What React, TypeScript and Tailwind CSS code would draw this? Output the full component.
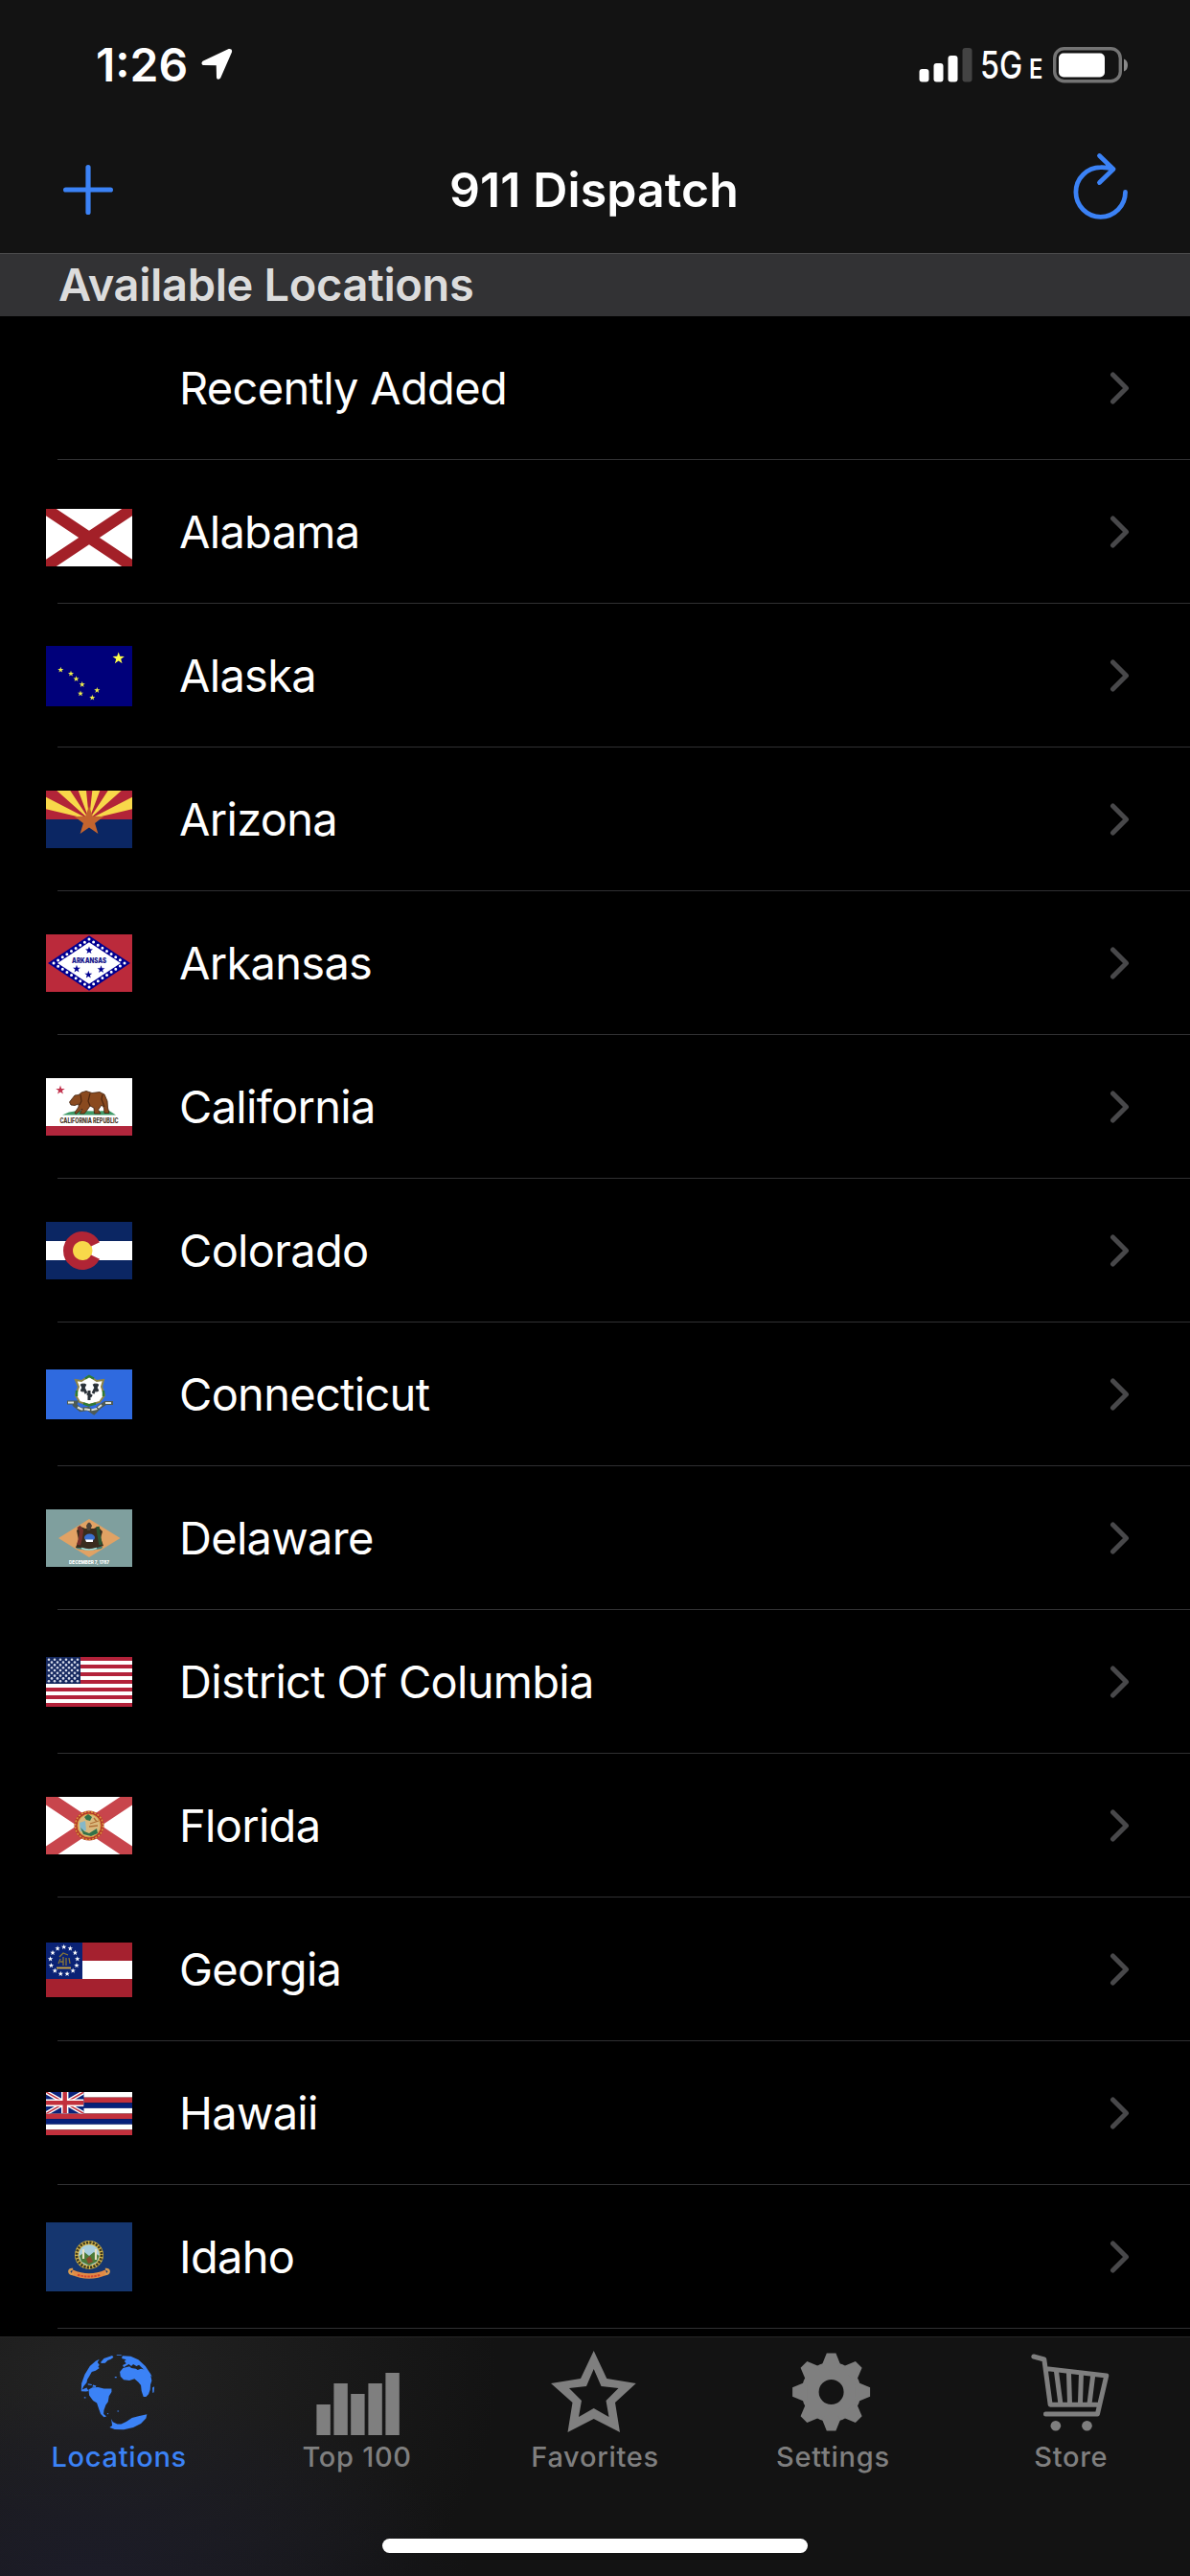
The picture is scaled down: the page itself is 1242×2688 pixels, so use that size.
import type { ReactNode } from "react";

type Location = {
  name: string;
  height?: number;
  shift?: boolean;
  flag?: ReactNode;
};

function starPoints(cx: number, cy: number, r: number) {
  return Array.from({ length: 10 }, (_, i) => {
    const a = (Math.PI / 5) * i - Math.PI / 2;
    const d = i % 2 ? r * 0.4 : r;
    return `${(cx + d * Math.cos(a)).toFixed(2)},${(cy + d * Math.sin(a)).toFixed(2)}`;
  }).join(" ");
}

function Star({ x, y, r, fill }: { x: number; y: number; r: number; fill: string }) {
  return <polygon points={starPoints(x, y, r)} fill={fill} />;
}

const alabama = (
  <>
    <rect width="90" height="60" fill="#fff" />
    <path d="M0 0 90 60M90 0 0 60" stroke="#a32028" strokeWidth="12" />
  </>
);

const alaska = (
  <>
    <rect width="90" height="63" fill="#00007a" />
    <Star x={75.7} y={12.9} r={6.5} fill="#ffff4a" />
    {[
      [15.3, 25],
      [26, 29],
      [31.5, 34.5],
      [37.7, 40.3],
      [36, 49.7],
      [53.3, 46.3],
      [48.3, 54],
    ].map(([x, y]) => (
      <Star key={x} x={x} y={y} r={3.2} fill="#efef4a" />
    ))}
  </>
);

const arizona = (
  <>
    <rect width="90" height="30" fill="#b22438" />
    <rect y="30" width="90" height="30" fill="#0b2663" />
    <path
      d="M45 30 0 19.3V6.7ZM45 30 11.3 0H25.3ZM45 30 33.7 0H42ZM45 30 48.3 0H56.3ZM45 30 64.7 0H78.7ZM45 30 90 6.7V19.3Z"
      fill="#f8d84a"
    />
    <Star x={45} y={32} r={16} fill="#c4642e" />
  </>
);

const arkansas = (
  <>
    <rect width="90" height="60" fill="#bb2a3b" />
    <path d="M2 30 45 1.2 88 30 45 58.8Z" fill="#000091" />
    <path d="M12 30 45 8.3 78 30 45 51.7Z" fill="#fff" />
    <path
      d="M8 30 45 5 82 30 45 55Z"
      fill="none"
      stroke="#fff"
      strokeWidth="3"
      strokeLinecap="round"
      strokeDasharray="0 5.58"
    />
    <Star x={45} y={16.7} r={4.2} fill="#000091" />
    <Star x={32} y={36} r={4.2} fill="#000091" />
    <Star x={57.5} y={36.5} r={4.2} fill="#000091" />
    <Star x={44.3} y={42} r={4.2} fill="#000091" />
    <text
      x="45"
      y="29.6"
      textAnchor="middle"
      textLength="36"
      lengthAdjust="spacingAndGlyphs"
      fontSize="7.4"
      fontWeight="900"
      fill="#1a1a8c"
    >
      ARKANSAS
    </text>
  </>
);

const california = (
  <>
    <rect width="90" height="60" fill="#fff" />
    <rect y="50" width="90" height="10" fill="#b1263c" />
    <Star x={15} y={12.5} r={5} fill="#c2334e" />
    <path d="M17 38.5 24 35.5 33 34 52 34.5 66 34 73 38.5Z" fill="#3f9a68" />
    <path
      d="M24.5 25 28 20.5 30 18 34 17.5 37 15 42 13.5 48 15.5 56 14.5 61 17 64 24 64.5 31 66 36.5 61 36.5 60.5 31 58 28 54.5 33 57 37 50.5 37 50 31 46 29 42.5 34 40 37 35.5 37 38 32 33 36 31 37.5 30 36 34 30 34 27 30 28.5 26 28Z"
      fill="#8a4a1f"
      stroke="#3d1f0c"
      strokeWidth="0.8"
    />
    <path d="M46 16 44 24 46 29M59 17 58 22 61 30M36 17 37 24 35 28" fill="none" stroke="#4e260e" strokeWidth="1.2" />
    <text
      x="45"
      y="46.8"
      textAnchor="middle"
      textLength="61"
      lengthAdjust="spacingAndGlyphs"
      fontSize="7.2"
      fontWeight="800"
      fill="#4a3728"
    >
      CALIFORNIA REPUBLIC
    </text>
  </>
);

const colorado = (
  <>
    <rect width="90" height="60" fill="#0b2663" />
    <rect y="20" width="90" height="20" fill="#fff" />
    <circle cx="38" cy="30" r="10.5" fill="#f8d84a" />
    <path d="M51.5 23.4A15 15 0 1 0 51.5 36.6" fill="none" stroke="#b02535" strokeWidth="10" />
  </>
);

const connecticut = (
  <>
    <rect width="90" height="52" fill="#2f6adf" />
    <path
      d="M31 11 37 12 45 7 53 12 60 11 58 18 61 27 56 34 45 37 35 34 31 27 34 18Z"
      fill="#fff"
      stroke="#8f8444"
      strokeWidth="2"
    />
    <path
      d="M41 9.5 45 7 50 9.5M32 22V28M60 22V28M39 35.5 45 37.500 52 35.5"
      fill="none"
      stroke="#2f7a35"
      strokeWidth="2.5"
    />
    <path
      d="M37 15 42 25M41 15 37 23M54 15 49 25M50 15 54 23M45 22V32M43 25 48 28"
      stroke="#2a3138"
      strokeWidth="3"
    />
    <path
      d="M22 34.5H31L30 37 36 42 44 41 50 45 56 39 62 35H70"
      fill="none"
      stroke="#4d5a55"
      strokeWidth="4.2"
    />
    <path
      d="M23 34.5H29M62 35H68M33 39.5 37 41.5 42 41.5 47 42.5 53 41 58 37"
      fill="none"
      stroke="#dce0d8"
      strokeWidth="2"
      strokeDasharray="6 1.5"
    />
  </>
);

const delaware = (
  <>
    <rect width="90" height="60" fill="#7f9f9e" />
    <path d="M13 30 45 10 77.5 30 45 50Z" fill="#e1a264" />
    <ellipse cx="45" cy="39.5" rx="14" ry="3" fill="#3d7f7a" />
    <path
      d="M32 22 36 18 41 20 50 20 54 18 59 23 57 30 60 38 53 40 45 42 37 40 31 40 34 32Z"
      fill="#3a2c1d"
    />
    <path d="M34 18 37 22 36 30 34 37" fill="none" stroke="#75302c" strokeWidth="4" />
    <path d="M54 18 55 25 56 31 57 37" fill="none" stroke="#2b5633" strokeWidth="3.5" />
    <path d="M42 17Q45 10 48 17L46 22H43Z" fill="#4a4038" />
    <ellipse cx="45.5" cy="29.5" rx="5.5" ry="4" fill="#3a6fd0" />
    <path d="M41 31.5H49V34H42Z" fill="#fff" />
    <path d="M37 40.5Q45 43.5 53 40.5" fill="none" stroke="#a5dcd6" strokeWidth="1.5" />
    <text
      x="45"
      y="56.8"
      textAnchor="middle"
      textLength="42"
      lengthAdjust="spacingAndGlyphs"
      fontSize="5.2"
      fontWeight="800"
      fill="#fff"
    >
      DECEMBER 7, 1787
    </text>
  </>
);

const columbia = (
  <>
    <rect width="90" height="52" fill="#fff" />
    {[0, 8, 16, 24, 32, 40, 48].map((y) => (
      <rect key={y} y={y} width="90" height="4" fill="#b3223a" />
    ))}
    <rect width="36" height="28" fill="#16295f" />
    {Array.from({ length: 9 }, (_, row) =>
      Array.from({ length: row % 2 ? 5 : 6 }, (_, col) => (
        <circle key={`${row}-${col}`} cx={3 + col * 6 + (row % 2) * 3} cy={2.8 + row * 2.8} r="1.3" fill="#d5daea" />
      )),
    )}
  </>
);

const florida = (
  <>
    <rect width="90" height="60" fill="#fff" />
    <path d="M0 0 90 60M90 0 0 60" stroke="#c8454c" strokeWidth="14" />
    <circle cx="45" cy="30" r="15.5" fill="#b5382a" />
    <circle cx="45" cy="30" r="14.5" fill="none" stroke="#dd9c3c" strokeWidth="1.5" strokeDasharray="2 1.5" />
    <circle cx="45" cy="30" r="12" fill="#d9b97d" stroke="#d79a3a" strokeWidth="1" />
    <path d="M35 27 41 25 42 35 36 36Z" fill="#86b8c8" />
    <path d="M40 21 44 18 48 21 46 25 42 24ZM36 32 40 36 45 38 53 33 54 38 47 41 39 39Z" fill="#347249" />
    <path d="M46 28 55 25M45 31 54 30M50 22 53 26" stroke="#b06e35" strokeWidth="1.3" />
  </>
);

const georgia = (
  <>
    <rect width="90" height="57" fill="#a5212f" />
    <rect y="19" width="90" height="19" fill="#fff" />
    <rect width="38" height="38" fill="#0a2275" />
    {Array.from({ length: 13 }, (_, i) => {
      const a = (Math.PI * 2 * i) / 13 - Math.PI / 2;
      return <Star key={i} x={18.7 + 14.2 * Math.cos(a)} y={18.8 + 14.2 * Math.sin(a)} r={2.9} fill="#fff" />;
    })}
    <path
      d="M14 15 18 11 23 13M13 22 15 17M18 15V24M21 16V24M24 16 25 22M15 20H18"
      fill="none"
      stroke="#8b7835"
      strokeWidth="1.3"
    />
    <path d="M11 26.5H26" stroke="#d2a941" strokeWidth="1.8" />
  </>
);

const hawaii = (
  <>
    {["#fff", "#c2303c", "#06207a", "#fff", "#c2303c", "#06207a", "#fff", "#c2303c"].map((fill, i) => (
      <rect key={i} y={i * 5.625} width="90" height="5.7" fill={fill} />
    ))}
    <svg width="39.5" height="22.5" viewBox="0 0 39.5 22.5">
      <rect width="40" height="22.5" fill="#0a237b" />
      <path d="M0 0 39.5 22.5M39.5 0 0 22.5" stroke="#fff" strokeWidth="4.2" />
      <path d="M0 0 39.5 22.5M39.5 0 0 22.5" stroke="#c2303c" strokeWidth="1.5" />
      <path d="M19.7 0V22.5M0 11.2H39.5" stroke="#fff" strokeWidth="7.4" />
      <path d="M19.7 0V22.5M0 11.2H39.5" stroke="#c2303c" strokeWidth="4.4" />
    </svg>
  </>
);

const idaho = (
  <>
    <rect width="90" height="72" fill="#15366f" />
    <circle cx="45" cy="34" r="15" fill="#d9b848" />
    <circle cx="45" cy="34" r="13" fill="none" stroke="#3b3820" strokeWidth="2.8" strokeDasharray="2.2 1.2" />
    <circle cx="45" cy="34" r="10.8" fill="#a8cfdf" />
    <path d="M35 35 40 31 45 35 50 31 55.5 35 53 41 45 45 37 41Z" fill="#4c7b38" />
    <path d="M39 28V38M52 28V39" stroke="#e9e2c5" strokeWidth="2.2" />
    <path d="M42 38 46 35 49 41 44 43Z" fill="#8b4a2a" />
    <path d="M27 52Q45 60 63 52" fill="none" stroke="#e28a45" strokeWidth="5.5" />
    <path d="M33 54.7Q45 58.5 57 54.7" fill="none" stroke="#d4472f" strokeWidth="2" strokeDasharray="2.5 1" />
    <path d="M29 54C23 55 23 48 28 49M61 54C67 55 67 48 62 49" fill="none" stroke="#d99b50" strokeWidth="2.5" />
  </>
);

const locations: Location[] = [
  { name: "Recently Added" },
  { name: "Alabama", height: 60, shift: true, flag: alabama },
  { name: "Alaska", height: 63, flag: alaska },
  { name: "Arizona", height: 60, flag: arizona },
  { name: "Arkansas", height: 60, flag: arkansas },
  { name: "California", height: 60, flag: california },
  { name: "Colorado", height: 60, flag: colorado },
  { name: "Connecticut", height: 52, flag: connecticut },
  { name: "Delaware", height: 60, flag: delaware },
  { name: "District Of Columbia", height: 52, flag: columbia },
  { name: "Florida", height: 60, flag: florida },
  { name: "Georgia", height: 57, flag: georgia },
  { name: "Hawaii", height: 45, flag: hawaii },
  { name: "Idaho", height: 72, flag: idaho },
];

function StatusBar() {
  return (
    <div className="flex h-[136px] items-center justify-between pl-[100px] pr-16">
      <div className="flex items-center gap-[14px]">
        <span className="text-[48px] font-semibold">1:26</span>
        <svg className="mb-0.5" width="33" height="34" viewBox="0 0 33 34" fill="#fff">
          <path
            d="M2 14.5 29 1.8Q31.5 1.5 31.3 4L19.5 31Q17.5 33 16.8 31L16.5 17.5 2 17.2Q0.500 16 2 14.5Z"
            stroke="#fff"
            strokeWidth="1.6"
            strokeLinejoin="round"
          />
        </svg>
      </div>
      <div className="flex items-center">
        <svg width="56" height="36" viewBox="0 0 56 36" fill="#fff">
          <rect x="0.5" y="22" width="10" height="13.5" rx="3" />
          <rect x="15.5" y="16" width="10" height="19.5" rx="3" />
          <rect x="30.5" y="8" width="10" height="27.5" rx="3" />
          <rect x="45.5" y="0" width="10" height="35.5" rx="3" fill="#434343" />
        </svg>
        <div className="ml-2 flex items-baseline gap-1.5">
          <span className="w-[45px] origin-left scale-x-[0.83] text-[39px] font-medium">5G</span>
          <span className="w-[17px] origin-left scale-x-[0.85] text-[28px] font-semibold">E</span>
        </div>
        <svg className="ml-2" width="79" height="38" viewBox="0 0 79 38">
          <rect x="1.7" y="1.7" width="68.6" height="34" rx="10" fill="none" stroke="#747474" strokeWidth="3.4" />
          <rect x="6" y="6.5" width="48" height="25" rx="5" fill="#fff" />
          <path d="M74 12.5Q78 14 78 19T74 25.5Z" fill="#8a8a8a" />
        </svg>
      </div>
    </div>
  );
}

function NavBar() {
  return (
    <div className="flex h-32 items-center justify-between px-16 pb-1">
      <svg width="56" height="56" viewBox="0 0 56 56" stroke="#3b82f6" strokeWidth="5.2" strokeLinecap="round">
        <path d="M28 4.6V51.4M4.6 28H51.4" />
      </svg>
      <h1 className="text-[50px] font-semibold tracking-[0.1px]">911 Dispatch</h1>
      <svg
        className="mb-1.5"
        width="58"
        height="72"
        viewBox="0 0 58 72"
        fill="none"
        stroke="#3b82f6"
        strokeWidth="4.8"
        strokeLinecap="round"
        strokeLinejoin="round"
      >
        <path d="M54.5 41.5A25.8 25.8 0 1 1 28.7 15.7Q36 15.500 42 17.5M27.5 3.500 42 17.5 27.5 31.5" />
      </svg>
    </div>
  );
}

function Row({ name, height, shift, flag }: Location) {
  return (
    <li>
      <div className="flex h-[149px] items-center pt-px">
        <div className="ml-12 w-[139px] shrink-0">
          {flag && (
            <svg className={shift ? "mt-3" : ""} width="90" height={height} viewBox={`0 0 90 ${height}`}>
              {flag}
            </svg>
          )}
        </div>
        <span className="text-[47px] tracking-[-0.7px]">{name}</span>
        <svg
          className="ml-auto mr-[62px]"
          width="22"
          height="36"
          viewBox="0 0 22 36"
          fill="none"
          stroke="#48484a"
          strokeWidth="5"
          strokeLinecap="round"
          strokeLinejoin="round"
        >
          <path d="M3.5 4 17.5 18 3.5 32" />
        </svg>
      </div>
      <div className="ml-[60px] h-px bg-[#303032]" />
    </li>
  );
}

function GlobeIcon() {
  return (
    <svg width="100" height="100" viewBox="0 0 100 100">
      <g transform="translate(1.8 0) scale(0.333)" fill="currentColor">
        <path d="M88 60 98 48 124 39 128 44 120 50 110 54 102 62 90 63Z" />
        <path d="M72 56 84 50 78 60 84 68 80 74 84 78 72 86 60 90 52 104 46 114 44 124 34 136 30 146 44 140 50 150 42 152 27 151 28 126 38 98 54 72Z" />
        <path d="M48 127 60 129 60 132 48 131ZM64 131 74 134 72 138 62 137ZM36 169 41 169 41 173 36 173ZM108 219 113 220 110 224ZM140 212H145V215H140ZM132 105H138V109H132ZM138 37H153V39H138Z" />
        <path d="M50 146 62 139 80 138 98 143 122 143 122 153 114 166 111 184 104 194 98 210 97 222 106 230 98 232 88 222 82 206 76 188 64 180 52 164Z" />
        <path d="M156 40 182 41 206 52 228 72 244 96 249 106 238 96 222 82 214 74 208 68 200 72 190 66 184 72 176 66 160 76 157 69 168 64 162 56 168 52 154 48Z" />
        <path d="M148 90 158 78 178 73 184 78 198 80 204 84 214 80 232 84 244 98 248 118 244 130 243 146 238 160 230 168 222 168 216 150 214 132 206 122 194 112 178 117 160 115 150 104Z" />
        <path d="M250 140 256 136 255 154 251 156Z" />
        <path d="M121 237 126 247 140 254 152 254 168 246 186 234 206 229 233 223 230 236 214 252 190 264 160 271 132 270 116 264 124 258Z" />
      </g>
    </svg>
  );
}

function ChartIcon() {
  return (
    <svg width="100" height="100" viewBox="0 0 100 100" fill="currentColor">
      <rect x="7.4" y="64" width="14.4" height="32" />
      <rect x="25.4" y="42" width="14.4" height="54" />
      <rect x="43.2" y="53" width="14.4" height="43" />
      <rect x="61.4" y="42" width="14.4" height="54" />
      <rect x="79.4" y="31" width="14.4" height="65" />
    </svg>
  );
}

function StarIcon() {
  return (
    <svg width="100" height="100" viewBox="0 0 100 100" fill="currentColor">
      <path
        fillRule="evenodd"
        d="M48.7 8 62.3 37 92.8 42 71 62 76 93 48.7 79 21.5 93 26.5 62 4 42 35 37ZM48.7 27 41 45 23 47 36 60 33 77 48.7 68 64.5 77 61.5 60 74.5 47 56.5 45Z"
      />
    </svg>
  );
}

function GearIcon() {
  return (
    <svg width="100" height="100" viewBox="0 0 100 100">
      <g transform="translate(48.6 51)">
        <circle r="22" fill="none" stroke="currentColor" strokeWidth="18" />
        {[0, 45, 90, 135, 180, 225, 270, 315].map((deg) => (
          <path key={deg} d="M-9.4-29 -4.8-40.5H4.8L9.4-29 7-25H-7Z" transform={`rotate(${deg})`} fill="currentColor" />
        ))}
      </g>
    </svg>
  );
}

function CartIcon() {
  return (
    <svg width="100" height="100" viewBox="0 0 100 100">
      <g
        transform="translate(-7.8 -5) scale(0.333)"
        fill="none"
        stroke="currentColor"
        strokeWidth="15"
        strokeLinecap="round"
        strokeLinejoin="round"
      >
        <path d="M56 57 89 66 108 208H254M96 95 284 117 256 237H94" />
        <path d="M127 104 140 203M166 107 169 203M205 110 202 203M242 114 231 203" />
        <circle cx="125" cy="274" r="16" fill="currentColor" stroke="none" />
        <circle cx="223" cy="274" r="16" fill="currentColor" stroke="none" />
      </g>
    </svg>
  );
}

const tabs = [
  { label: "Locations", icon: <GlobeIcon />, active: true },
  { label: "Top 100", icon: <ChartIcon /> },
  { label: "Favorites", icon: <StarIcon /> },
  { label: "Settings", icon: <GearIcon /> },
  { label: "Store", icon: <CartIcon /> },
];

function TabBar() {
  return (
    <nav className="mt-2 flex h-[250px] flex-col items-center border-t border-[#262626] bg-[#131313] bg-[radial-gradient(ellipse_400px_200px_at_90px_250px,#1c1c28_0%,#1c1c2800_100%),radial-gradient(ellipse_430px_330px_at_90px_40px,#232323_0%,#23232300_100%)]">
      <div className="flex w-full pt-1.5">
        {tabs.map((tab) => (
          <a
            key={tab.label}
            className={`flex flex-1 flex-col items-center ${tab.active ? "text-[#3b82f6]" : "text-[#7f7f7f]"}`}
          >
            {tab.icon}
            <span className="text-[29px] font-medium leading-[38px] tracking-[0.7px]">{tab.label}</span>
          </a>
        ))}
      </div>
      <div className="mt-[66px] h-[15px] w-[444px] rounded-full bg-white" />
    </nav>
  );
}

export default function App() {
  return (
    <div className="flex h-[2688px] w-[1242px] flex-col overflow-hidden bg-black font-[Inter,'Liberation_Sans',sans-serif] text-white">
      <header className="h-[265px] border-b border-[#4b4b4b] bg-[#131313]">
        <StatusBar />
        <NavBar />
      </header>
      <main>
        <h2 className="flex h-[65px] items-center bg-[#323234] pl-[61px] text-[47px] font-semibold tracking-[-0.35px] text-[#dcdcdc]">
          Available Locations
        </h2>
        <ul>
          {locations.map((location) => (
            <Row key={location.name} {...location} />
          ))}
        </ul>
      </main>
      <TabBar />
    </div>
  );
}
